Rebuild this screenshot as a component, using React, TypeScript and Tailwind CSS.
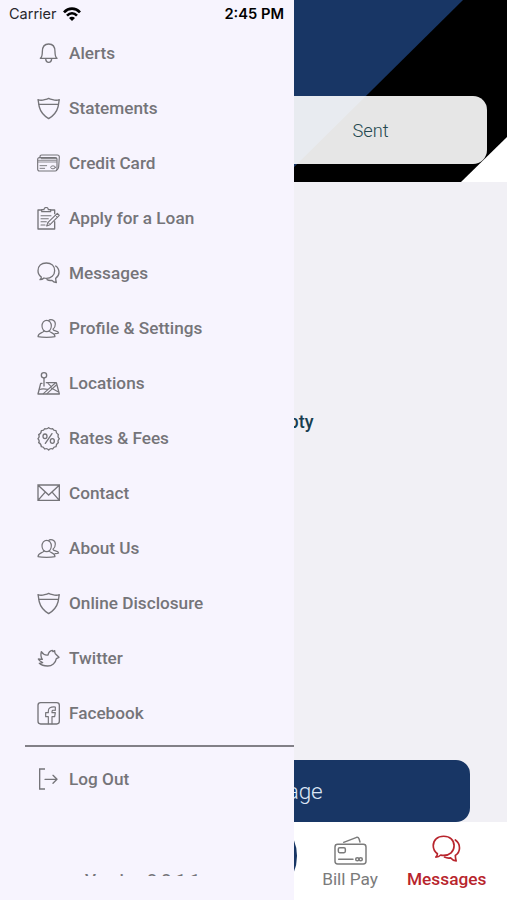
import React from "react";

type IconProps = {
  className?: string;
};

type MenuItem = {
  label: string;
  icon: React.ReactNode;
};

const Line = ({
  children,
  className = "h-6 w-6",
}: {
  children: React.ReactNode;
  className?: string;
}) => (
  <svg
    viewBox="0 0 72 72"
    className={className}
    fill="none"
    stroke="currentColor"
    strokeWidth="4"
    strokeLinejoin="round"
    strokeLinecap="round"
  >
    {children}
  </svg>
);

const BellIcon = () => (
  <Line>
    <path d="M10 49c5-4 6-9 6-20 0-15 7-23 19-23s19 8 19 23c0 11 1 16 6 20z" />
    <path d="M26 50c1 15 17 15 18 0" />
  </Line>
);

const ShieldIcon = () => (
  <Line>
    <path d="M3 8c7 3 14 2 20 0 4-1 8-2 12-4 4 2 8 3 12 4 6 2 13 3 20 0-2 8-2 14-4 22-4 16-15 27-28 35C22 57 11 46 7 30 5 22 5 16 3 8z" />
    <path d="M6 22h58" />
  </Line>
);

const CreditCardIcon = () => (
  <Line>
    <path d="M9 17v-3q0-5 5-5h47q6 0 6 6l-2 30q-1 6-5 8" strokeWidth="3.4" />
    <rect x="2" y="17" width="58" height="40" rx="5" strokeWidth="3.4" />
    <path d="M4 25h54M4 30h54" strokeWidth="2.4" />
    <path d="M9 41h20M9 49h14M13 20h46" strokeWidth="2.8" />
    <ellipse cx="48" cy="46" rx="7" ry="4.5" strokeWidth="2.8" />
  </Line>
);

const LoanIcon = () => (
  <Line>
    <path d="M14 9H3v57h50V44M40 9h13v11" />
    <path d="M14 14V8h7c0-9 13-9 13 0h7v6z" strokeWidth="3.4" />
    <path d="M12 26h30M12 35h22M12 44h16M12 54h12" strokeWidth="3.2" />
    <path d="M61 19l6 6-28 28-10 4 4-11z" strokeWidth="3.4" />
    <path d="M55 25l6 6M33 46l6 6" strokeWidth="2.6" />
  </Line>
);

const MessagesIcon = ({ className }: IconProps) => (
  <Line className={className}>
    <path d="M9 53c3-2 4-5 4-8C6 40 3 34 3 26 3 12 13 3 28 3s25 9 25 23-11 23-25 23c-3 0-5 0-7-1-3 3-7 5-12 5z" />
    <path d="M56 12c6 4 10 11 10 19s-4 14-10 18c0 4 1 9 2 13-6-1-10-3-13-7-6 1-11 0-15-2" />
  </Line>
);

const PeopleIcon = () => (
  <Line>
    <ellipse cx="29" cy="27" rx="14" ry="17" strokeWidth="3.5" />
    <path
      d="M21 41c0 7-18 5-18 18 12 3 39 3 51 0 0-13-17-11-17-18M35 11c3-5 20-5 20 10 0 8-3 13-7 16 1 6 16 3 17 11-3 2-7 2-11 2"
      strokeWidth="3.5"
    />
  </Line>
);

const LocationIcon = () => (
  <Line>
    <circle cx="21" cy="10" r="8" />
    <path d="M21 19v23" />
    <path d="M15 34h-4L3 66h64l-9-34H28" />
    <path d="M19 65l36-32M30 65l28-26M8 53c8-5 18-1 24-1M43 48l20 11M33 34l9 9" strokeWidth="3.2" />
  </Line>
);

const RatesIcon = () => (
  <Line>
    <path d="M35 2c4 5 8 4 12 3 2 5 4 6 10 6 0 6 2 9 7 12-2 5-2 8 3 12-5 4-5 7-3 12-5 3-7 6-7 12-6 0-8 2-10 7-4-2-8-2-12 3-4-5-8-5-12-3-2-5-5-7-10-7 0-6-2-9-8-12 3-5 2-8-2-12 4-4 5-7 2-12 6-3 8-6 8-12 5 0 8-1 10-6 4 1 8 2 12-3z" />
    <path d="M45 20L25 49" />
    <ellipse cx="24" cy="28" rx="6" ry="7" />
    <ellipse cx="46" cy="42" rx="6" ry="7" />
  </Line>
);

const MailIcon = () => (
  <Line>
    <path d="M3 9h64v46H3zM5 11l30 28 30-28M5 53l19-22M65 53L46 31" strokeLinejoin="miter" />
  </Line>
);

const TwitterIcon = () => (
  <Line>
    <path d="M13 14c5 8 13 11 20 10 2-9 6-13 13-14l2 4 5-3c0 4 0 6 2 9l11 11-8 4c-2 13-13 22-26 22-10 0-19-2-25-8l10-2C10 44 6 41 4 36l12 1c-5-7-5-15-3-23z" />
  </Line>
);

const FacebookIcon = () => (
  <Line>
    <rect x="3" y="2" width="64" height="64" rx="8" />
    <path
      d="M34 65V44h-8V32h8v-5c0-9 6-13 21-12v10c-8-1-10 0-10 4v3h10l-2 12h-8v21"
      strokeWidth="3.5"
    />
  </Line>
);

const LogOutIcon = () => (
  <Line>
    <path d="M24 3H8v60h16" strokeLinejoin="miter" strokeLinecap="butt" />
    <path d="M24 34h35M48 22l12 12-12 12" />
  </Line>
);

const BillPayIcon = () => (
  <svg
    viewBox="0 0 99 87"
    className="h-[29px] w-[33px]"
    fill="none"
    stroke="currentColor"
    strokeWidth="4.4"
    strokeLinecap="round"
    strokeLinejoin="round"
  >
    <rect x="3" y="25" width="93" height="59" rx="8" />
    <path d="M29 19L68 4q5-1 7 4l3 10" />
    <rect x="13" y="35" width="21" height="15" rx="4" />
    <path d="M14 70h43" />
    <ellipse cx="70" cy="70" rx="5" ry="4.5" />
    <ellipse cx="80" cy="70" rx="5" ry="4.5" />
  </svg>
);

const WifiIcon = () => (
  <svg viewBox="0 0 54 42" className="h-[14px] w-[18px]" fill="none" stroke="black" strokeWidth="8">
    <path d="M3 16C17 1 37 1 51 16" />
    <path d="M12 26c9-9 21-9 30 0" />
    <path d="M18 33c5-5 13-5 18 0l-9 9z" fill="black" stroke="none" />
  </svg>
);

const menuItems: MenuItem[] = [
  { label: "Alerts", icon: <BellIcon /> },
  { label: "Statements", icon: <ShieldIcon /> },
  { label: "Credit Card", icon: <CreditCardIcon /> },
  { label: "Apply for a Loan", icon: <LoanIcon /> },
  { label: "Messages", icon: <MessagesIcon /> },
  { label: "Profile & Settings", icon: <PeopleIcon /> },
  { label: "Locations", icon: <LocationIcon /> },
  { label: "Rates & Fees", icon: <RatesIcon /> },
  { label: "Contact", icon: <MailIcon /> },
  { label: "About Us", icon: <PeopleIcon /> },
  { label: "Online Disclosure", icon: <ShieldIcon /> },
  { label: "Twitter", icon: <TwitterIcon /> },
  { label: "Facebook", icon: <FacebookIcon /> },
];

const MenuRow = ({ label, icon }: MenuItem) => (
  <li className="flex h-[55px] cursor-pointer items-center gap-2 pl-[37px]">
    {icon}
    <span className="pt-px text-[17.2px] font-medium">{label}</span>
  </li>
);

const Drawer = () => (
  <aside className="absolute inset-y-0 left-0 flex w-[294px] flex-col bg-[#f7f4fe] text-[#757479]">
    <div className="flex h-[26px] items-center justify-between pt-[2px] pr-[10px] pl-[9px] font-[Inter] text-[14.5px] text-black">
      <div className="flex items-center gap-[6px] text-[#28272c]">
        <span>Carrier</span>
        <WifiIcon />
      </div>
      <span className="text-[14.7px] font-semibold">2:45 PM</span>
    </div>
    <ul>
      {menuItems.map((item) => (
        <MenuRow key={item.label} label={item.label} icon={item.icon} />
      ))}
    </ul>
    <div className="mt-[3.5px] ml-[25px] h-[2px] bg-[#828087]" />
    <ul className="pt-[5.5px]">
      <MenuRow label="Log Out" icon={<LogOutIcon />} />
    </ul>
    <div className="mt-auto mb-6 h-[6px] overflow-hidden pl-[85px] text-[17px] leading-5 font-medium">
      Version 2.2.1.1
    </div>
  </aside>
);

const Header = () => (
  <header className="relative h-[182px] shrink-0 bg-black">
    <svg viewBox="0 0 507 182" className="absolute inset-0 h-full w-full">
      <path d="M0 0H463L279 182H0z" fill="#183665" />
      <path d="M507 137V182H461z" fill="#fff" />
    </svg>
    <div className="relative px-5 pt-24">
      <div className="grid h-[67.5px] grid-cols-2 items-center rounded-[14px] bg-white/90 pt-[2px] pl-px text-center text-[18.3px] font-light text-[#24484f]">
        <span>Inbox</span>
        <span>Sent</span>
      </div>
    </div>
  </header>
);

const TabBar = () => (
  <nav className="relative grid h-[78px] shrink-0 grid-cols-5 bg-white px-3 text-[17.3px] text-[#7b7b7b]">
    <div className="col-start-3 flex justify-center">
      <div className="-mt-[10px] h-[88px] w-[88px] shrink-0 rounded-full bg-[#183665]" />
    </div>
    <div className="flex flex-col items-center pt-[14px]">
      <BillPayIcon />
      <span className="pt-px leading-[26px]">Bill Pay</span>
    </div>
    <div className="flex flex-col items-center pt-[13px] text-[#b8252d]">
      <MessagesIcon className="h-[30px] w-[30px]" />
      <span className="pt-px leading-[26px] font-medium">Messages</span>
    </div>
  </nav>
);

const App = () => {
  return (
    <div className="relative flex h-[900px] w-[507px] flex-col overflow-hidden bg-[#f1f0f5] font-[Roboto,sans-serif]">
      <Header />
      <main className="flex flex-1 flex-col px-[37px]">
        <p className="pt-[226px] pl-px text-center text-lg font-medium text-[#183e50]">
          Mailbox Empty
        </p>
        <button className="mt-auto h-[62px] rounded-[14px] bg-[#183665] pt-[2px] text-[22.5px] font-light tracking-[-0.01em] text-[#dce6f5]">
          New Message
        </button>
      </main>
      <TabBar />
      <Drawer />
    </div>
  );
};

export default App;
